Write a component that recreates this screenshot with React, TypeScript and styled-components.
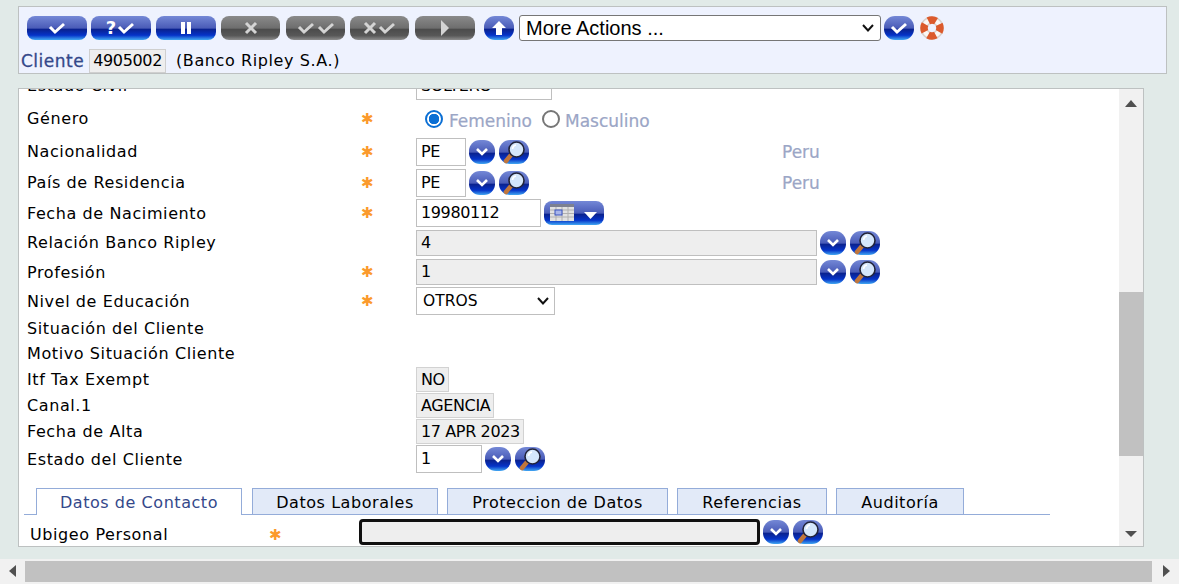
import React from "react";
import styled, { createGlobalStyle } from "styled-components";

const GlobalStyle = createGlobalStyle`
  html, body {
    margin: 0;
    padding: 0;
    width: 1179px;
    height: 584px;
    overflow: hidden;
    background: #e1eae8;
    font-family: "DejaVu Sans", Verdana, sans-serif;
  }
`;

const Page = styled.div`
  width: 1179px;
  height: 584px;
  display: flex;
  flex-direction: column;
`;

const Header = styled.div`
  box-sizing: border-box;
  width: 1149px;
  height: 68px;
  margin: 6px 0 0 18px;
  padding: 8px 0 0 8px;
  background: #eef2fe;
  border: 1px solid #bdc1c1;
  flex: none;
`;

const Toolbar = styled.div`
  display: flex;
  align-items: center;
  height: 26px;
`;

const Gloss = styled.span<{ $w: number; $off?: boolean; $ml?: number }>`
  flex: none;
  display: inline-flex;
  align-items: center;
  justify-content: center;
  box-sizing: border-box;
  width: ${(p) => p.$w}px;
  height: 24px;
  margin-left: ${(p) => p.$ml ?? 0}px;
  border-radius: ${(p) => (p.$w > 32 ? "8px" : "11px")};
  background: ${(p) =>
    p.$off
      ? "linear-gradient(#8a8a8a 0, #6e6e6e 50%, #4c4c4c 56%, #585858 82%, #8e8e8e 100%)"
      : "linear-gradient(#7488d6 0, #4a5cb8 50%, #0a2290 56%, #0533c8 80%, #42a8f2 100%)"};
`;

const Glyph = styled.svg<{ $off?: boolean }>`
  display: block;
  fill: none;
  stroke: ${(p) => (p.$off ? "#d4d4d4" : "#ffffff")};
  stroke-width: 3;
`;

const Check = ({ off }: { off?: boolean }) => (
  <Glyph $off={off} width="20" height="14" viewBox="0 0 20 14">
    <path d="M3 6 L8 11 L17 3" />
  </Glyph>
);

const Cross = () => (
  <Glyph $off width="14" height="14" viewBox="0 0 14 14">
    <path d="M2 2 L12 12 M12 2 L2 12" />
  </Glyph>
);

const Question = styled.span`
  color: #fff;
  font: bold 18px "DejaVu Sans", sans-serif;
  line-height: 16px;
`;

const Pause = () => (
  <svg width="14" height="14" viewBox="0 0 14 14">
    <rect x="2" y="1" width="4" height="12" fill="#fff" />
    <rect x="8" y="1" width="4" height="12" fill="#fff" />
  </svg>
);

const Play = () => (
  <svg width="10" height="18" viewBox="0 0 10 18">
    <path d="M1 1 L9 9 L1 17 Z" fill="#d4d4d4" />
  </svg>
);

const Up = () => (
  <svg width="16" height="16" viewBox="0 0 16 16">
    <path d="M8 1 L15 8 H11 V15 H5 V8 H1 Z" fill="#fff" />
  </svg>
);

const SelectWrap = styled.span<{ $w: number; $ml?: number }>`
  position: relative;
  display: inline-block;
  flex: none;
  width: ${(p) => p.$w}px;
  margin-left: ${(p) => p.$ml ?? 0}px;
`;

const SelectChevron = styled.svg<{ $right: number }>`
  position: absolute;
  top: 50%;
  right: ${(p) => p.$right}px;
  margin-top: -5px;
  fill: none;
  stroke: #111;
  stroke-width: 2;
  pointer-events: none;
`;

const ActionSelect = styled.select`
  appearance: none;
  display: block;
  box-sizing: border-box;
  width: 100%;
  height: 26px;
  padding: 0 0 0 6px;
  font: 20px "Liberation Sans", Arial, sans-serif;
  color: #000;
  background: #fff;
  border: 1px solid #767676;
  border-radius: 3px;
`;

const Ring = () => (
  <svg width="24" height="24" viewBox="0 0 24 24" style={{ flex: "none", marginLeft: 6 }}>
    <circle cx="12" cy="12" r="8" fill="none" stroke="#d9d0ca" strokeWidth="7.5" />
    <circle cx="12" cy="12" r="8" fill="none" stroke="#fbf8f5" strokeWidth="4.5" />
    <circle cx="12" cy="12" r="8" fill="none" stroke="#dc5a2c" strokeWidth="7.5" strokeDasharray="8 4.57" strokeDashoffset="4" />
  </svg>
);

const ClientLine = styled.div`
  display: flex;
  align-items: center;
  height: 25px;
  margin: 7px 0 0 -6px;
  font-size: 16px;
  letter-spacing: 0.6px;
  color: #000;
`;

const ClientLabel = styled.span`
  color: #34488a;
  font-size: 17px;
  letter-spacing: 0.5px;
  -webkit-text-stroke: 0.3px #34488a;
  margin-right: 5px;
`;

const ClientId = styled.span`
  box-sizing: border-box;
  height: 24px;
  line-height: 22px;
  padding: 0 3px 0 3px;
  letter-spacing: -0.35px;
  background: #eeeeee;
  border: 1px solid #cfcfcf;
  margin-right: 10px;
`;

const Panel = styled.div`
  box-sizing: border-box;
  position: relative;
  width: 1126px;
  height: 459px;
  margin: 14px 0 0 18px;
  background: #fff;
  border: 1px solid #bdc1c1;
  overflow: hidden;
  flex: none;
  padding-right: 24px;
`;

const Scroller = styled.div`
  margin-top: -19px;
`;

const Row = styled.div<{ $h: number }>`
  display: grid;
  grid-template-columns: 335px 54px 1fr;
  align-items: center;
  height: ${(p) => p.$h}px;
  padding-left: 8px;
  font-size: 16px;
  letter-spacing: 0.6px;
  color: #000;
`;

const Star = styled.span`
  color: #fb9a2c;
  font: 15px "DejaVu Sans", sans-serif;
  letter-spacing: 0;
  margin-left: -1px;
`;

const Value = styled.div`
  display: flex;
  align-items: center;
  letter-spacing: -0.38px;
`;

const RaisedValue = styled(Value)`
  margin-top: -5px;
`;

const Input = styled.span<{ $w: number; $grey?: boolean }>`
  box-sizing: border-box;
  display: inline-block;
  width: ${(p) => p.$w}px;
  height: ${(p) => (p.$grey ? "26px" : "28px")};
  line-height: ${(p) => (p.$grey ? "24px" : "26px")};
  padding-left: 4px;
  background: ${(p) => (p.$grey ? "#eeeeee" : "#fff")};
  border: 1px solid #bfbfbf;
  color: #000;
  flex: none;
`;

const Static = styled.span`
  box-sizing: border-box;
  display: inline-block;
  height: 25px;
  line-height: 23px;
  padding: 0 3px 0 4px;
  background: #eeeeee;
  border: 1px solid #d2d2d2;
`;

const EduSelect = styled.select`
  appearance: none;
  display: block;
  box-sizing: border-box;
  width: 100%;
  height: 28px;
  font: 15.5px "DejaVu Sans", sans-serif;
  color: #000;
  background: #fff;
  border: 1px solid #bfbfbf;
  padding-left: 6px;
`;

const Faded = styled.span`
  color: #9ba6c6;
  font-size: 17px;
  letter-spacing: 0;
  -webkit-text-stroke: 0.2px #9ba6c6;
`;

const GenderText = styled(Faded)`
  margin-top: 5px;
`;

const Peru = styled(Faded)`
  margin-left: 253px;
`;

const Radio = styled.span<{ $on?: boolean }>`
  box-sizing: border-box;
  display: inline-block;
  flex: none;
  width: 18px;
  height: 18px;
  border-radius: 50%;
  margin: 0 6px 0 9px;
  border: ${(p) => (p.$on ? "2px solid #0b6fd4" : "2px solid #767676")};
  background: ${(p) => (p.$on ? "radial-gradient(circle, #0b6fd4 0 5px, #fff 5.5px)" : "#fff")};
`;

const PlainRadio = styled(Radio)`
  margin: 0 5px 0 10px;
`;

const Drop = ({ ml = 3 }: { ml?: number }) => (
  <Gloss $w={26} $ml={ml}>
    <svg width="14" height="10" viewBox="0 0 14 10">
      <path d="M2 2 L7 7 L12 2" fill="none" stroke="#fff" strokeWidth="2.6" />
    </svg>
  </Gloss>
);

const Lens = ({ ml = 4 }: { ml?: number }) => (
  <Gloss $w={30} $ml={ml}>
    <svg width="30" height="24" viewBox="0 0 30 24">
      <path d="M12 15 L7 21" stroke="#c0763c" strokeWidth="4.5" strokeLinecap="round" />
      <circle cx="17.5" cy="9.5" r="7.5" fill="#d4e6fb" stroke="#22243a" strokeWidth="1.6" />
      <path d="M13.5 9 A4.5 4.5 0 0 1 17 5" fill="none" stroke="#fff" strokeWidth="1.6" />
    </svg>
  </Gloss>
);

const Calendar = () => (
  <Gloss $w={60} $ml={3}>
    <svg width="60" height="24" viewBox="0 0 60 24">
      <rect x="6" y="3" width="24" height="17" fill="#e2e2e2" />
      <rect x="6" y="3" width="24" height="3" fill="#7d8190" />
      <path d="M6 9 H30 M6 12.5 H30 M6 16 H30 M12 6 V20 M18 6 V20 M24 6 V20" stroke="#b0b0b0" strokeWidth="1" />
      <rect x="11" y="9" width="7" height="5" fill="#a9b6ea" stroke="#3a55c0" strokeWidth="1" />
      <path d="M40 11 H53 L46.5 18 Z" fill="#fff" />
    </svg>
  </Gloss>
);

const Tabs = styled.div`
  display: flex;
  height: 27px;
  box-sizing: border-box;
  width: 1026px;
  margin: 14px 0 0 5px;
  padding-left: 12px;
  border-bottom: 1px solid #94acd9;
`;

const Tab = styled.div<{ $w: number; $active?: boolean; $ml?: number }>`
  box-sizing: border-box;
  flex: none;
  width: ${(p) => p.$w}px;
  height: ${(p) => (p.$active ? "27px" : "26px")};
  margin-left: ${(p) => p.$ml ?? 0}px;
  text-align: center;
  line-height: 27px;
  font-size: 16px;
  letter-spacing: 0.55px;
  color: ${(p) => (p.$active ? "#34488a" : "#000")};
  background: ${(p) => (p.$active ? "#fff" : "#e2eaf8")};
  border: 1px solid #94acd9;
  border-bottom: 0;
`;

const UbigeoRow = styled.div`
  display: grid;
  grid-template-columns: 240px 89px 1fr;
  align-items: center;
  height: 39px;
  padding-left: 11px;
  font-size: 16px;
  letter-spacing: 0.6px;
`;

const FocusInput = styled.span`
  box-sizing: border-box;
  flex: none;
  width: 401px;
  height: 26px;
  background: #eeeeee;
  border: 3px solid #101010;
  border-radius: 4px;
`;

const VBar = styled.div`
  position: absolute;
  top: 0;
  right: 0;
  bottom: 0;
  width: 24px;
  background: #f1f1f1;
`;

const VThumb = styled.div`
  position: absolute;
  left: 0;
  right: 0;
  top: 203px;
  height: 164px;
  background: #c1c1c1;
`;

const Arrow = styled.span<{ $dir: "up" | "down" | "left" | "right" }>`
  position: absolute;
  width: 0;
  height: 0;
  ${(p) =>
    p.$dir === "up"
      ? "top: 11px; left: 6px; border: 6px solid transparent; border-top: 0; border-bottom: 7px solid #505050;"
      : p.$dir === "down"
      ? "bottom: 9px; left: 6px; border: 6px solid transparent; border-bottom: 0; border-top: 6px solid #505050;"
      : p.$dir === "left"
      ? "left: 9px; top: 6px; border: 6px solid transparent; border-left: 0; border-right: 7px solid #505050;"
      : "right: 9px; top: 6px; border: 6px solid transparent; border-right: 0; border-left: 7px solid #505050;"}
`;

const HBar = styled.div`
  position: relative;
  flex: none;
  height: 25px;
  margin-top: 12px;
  background: #f1f1f1;
  padding: 2px 27px 2px 25px;
  box-sizing: border-box;
`;

const HThumb = styled.div`
  height: 21px;
  background: #c1c1c1;
`;

export default function App() {
  return (
    <Page>
      <GlobalStyle />
      <Header>
        <Toolbar>
          <Gloss $w={60}><Check /></Gloss>
          <Gloss $w={60} $ml={4}><Question>?</Question><Check /></Gloss>
          <Gloss $w={60} $ml={5}><Pause /></Gloss>
          <Gloss $w={59} $ml={5} $off><Cross /></Gloss>
          <Gloss $w={59} $ml={6} $off><Check off /><Check off /></Gloss>
          <Gloss $w={59} $ml={5} $off><Cross /><Check off /></Gloss>
          <Gloss $w={60} $ml={6} $off><Play /></Gloss>
          <Gloss $w={30} $ml={9}><Up /></Gloss>
          <SelectWrap $w={362} $ml={5}>
            <ActionSelect defaultValue="more">
              <option value="more">More Actions ...</option>
            </ActionSelect>
            <SelectChevron $right={6} width="14" height="10" viewBox="0 0 14 10">
              <path d="M2 2 L7 7.5 L12 2" />
            </SelectChevron>
          </SelectWrap>
          <Gloss $w={30} $ml={3}><Check /></Gloss>
          <Ring />
        </Toolbar>
        <ClientLine>
          <ClientLabel>Cliente</ClientLabel>
          <ClientId>4905002</ClientId>
          <span>(Banco Ripley S.A.)</span>
        </ClientLine>
      </Header>
      <Panel>
        <Scroller>
          <Row $h={31}>
            <span>Estado Civil</span><span />
            <Value><Input $w={136}>SOLTERO</Input></Value>
          </Row>
          <Row $h={35}>
            <span>Género</span><Star>✱</Star>
            <Value><Radio $on /><GenderText>Femenino</GenderText><PlainRadio /><GenderText>Masculino</GenderText></Value>
          </Row>
          <Row $h={31}>
            <span>Nacionalidad</span><Star>✱</Star>
            <Value><Input $w={50}>PE</Input><Drop /><Lens /><Peru>Peru</Peru></Value>
          </Row>
          <Row $h={31}>
            <span>País de Residencia</span><Star>✱</Star>
            <Value><Input $w={50}>PE</Input><Drop /><Lens /><Peru>Peru</Peru></Value>
          </Row>
          <Row $h={30}>
            <span>Fecha de Nacimiento</span><Star>✱</Star>
            <Value><Input $w={125}>19980112</Input><Calendar /></Value>
          </Row>
          <Row $h={29}>
            <span>Relación Banco Ripley</span><span />
            <Value><Input $w={401} $grey>4</Input><Drop /><Lens /></Value>
          </Row>
          <Row $h={30}>
            <span>Profesión</span><Star>✱</Star>
            <Value><Input $w={401} $grey>1</Input><Drop /><Lens /></Value>
          </Row>
          <Row $h={28}>
            <span>Nivel de Educación</span><Star>✱</Star>
            <Value>
              <SelectWrap $w={139}>
                <EduSelect defaultValue="otros"><option value="otros">OTROS</option></EduSelect>
                <SelectChevron $right={5} width="14" height="10" viewBox="0 0 14 10">
                  <path d="M2 2 L7 7.5 L12 2" />
                </SelectChevron>
              </SelectWrap>
            </Value>
          </Row>
          <Row $h={26}><span>Situación del Cliente</span></Row>
          <Row $h={25}><span>Motivo Situación Cliente</span></Row>
          <Row $h={26}>
            <span>Itf Tax Exempt</span><span />
            <Value><Static>NO</Static></Value>
          </Row>
          <Row $h={26}>
            <span>Canal.1</span><span />
            <Value><Static>AGENCIA</Static></Value>
          </Row>
          <Row $h={26}>
            <span>Fecha de Alta</span><span />
            <Value><Static>17 APR 2023</Static></Value>
          </Row>
          <Row $h={30}>
            <span>Estado del Cliente</span><span />
            <Value><Input $w={66}>1</Input><Drop /><Lens /></Value>
          </Row>
          <Tabs>
            <Tab $w={206} $active>Datos de Contacto</Tab>
            <Tab $w={186} $ml={10}>Datos Laborales</Tab>
            <Tab $w={221} $ml={9}>Proteccion de Datos</Tab>
            <Tab $w={150} $ml={9}>Referencias</Tab>
            <Tab $w={128} $ml={9}>Auditoría</Tab>
          </Tabs>
          <UbigeoRow>
            <span>Ubigeo Personal</span><Star>✱</Star>
            <RaisedValue><FocusInput /><Drop /><Lens /></RaisedValue>
          </UbigeoRow>
        </Scroller>
        <VBar>
          <Arrow $dir="up" />
          <VThumb />
          <Arrow $dir="down" />
        </VBar>
      </Panel>
      <HBar>
        <Arrow $dir="left" />
        <HThumb />
        <Arrow $dir="right" />
      </HBar>
    </Page>
  );
}
